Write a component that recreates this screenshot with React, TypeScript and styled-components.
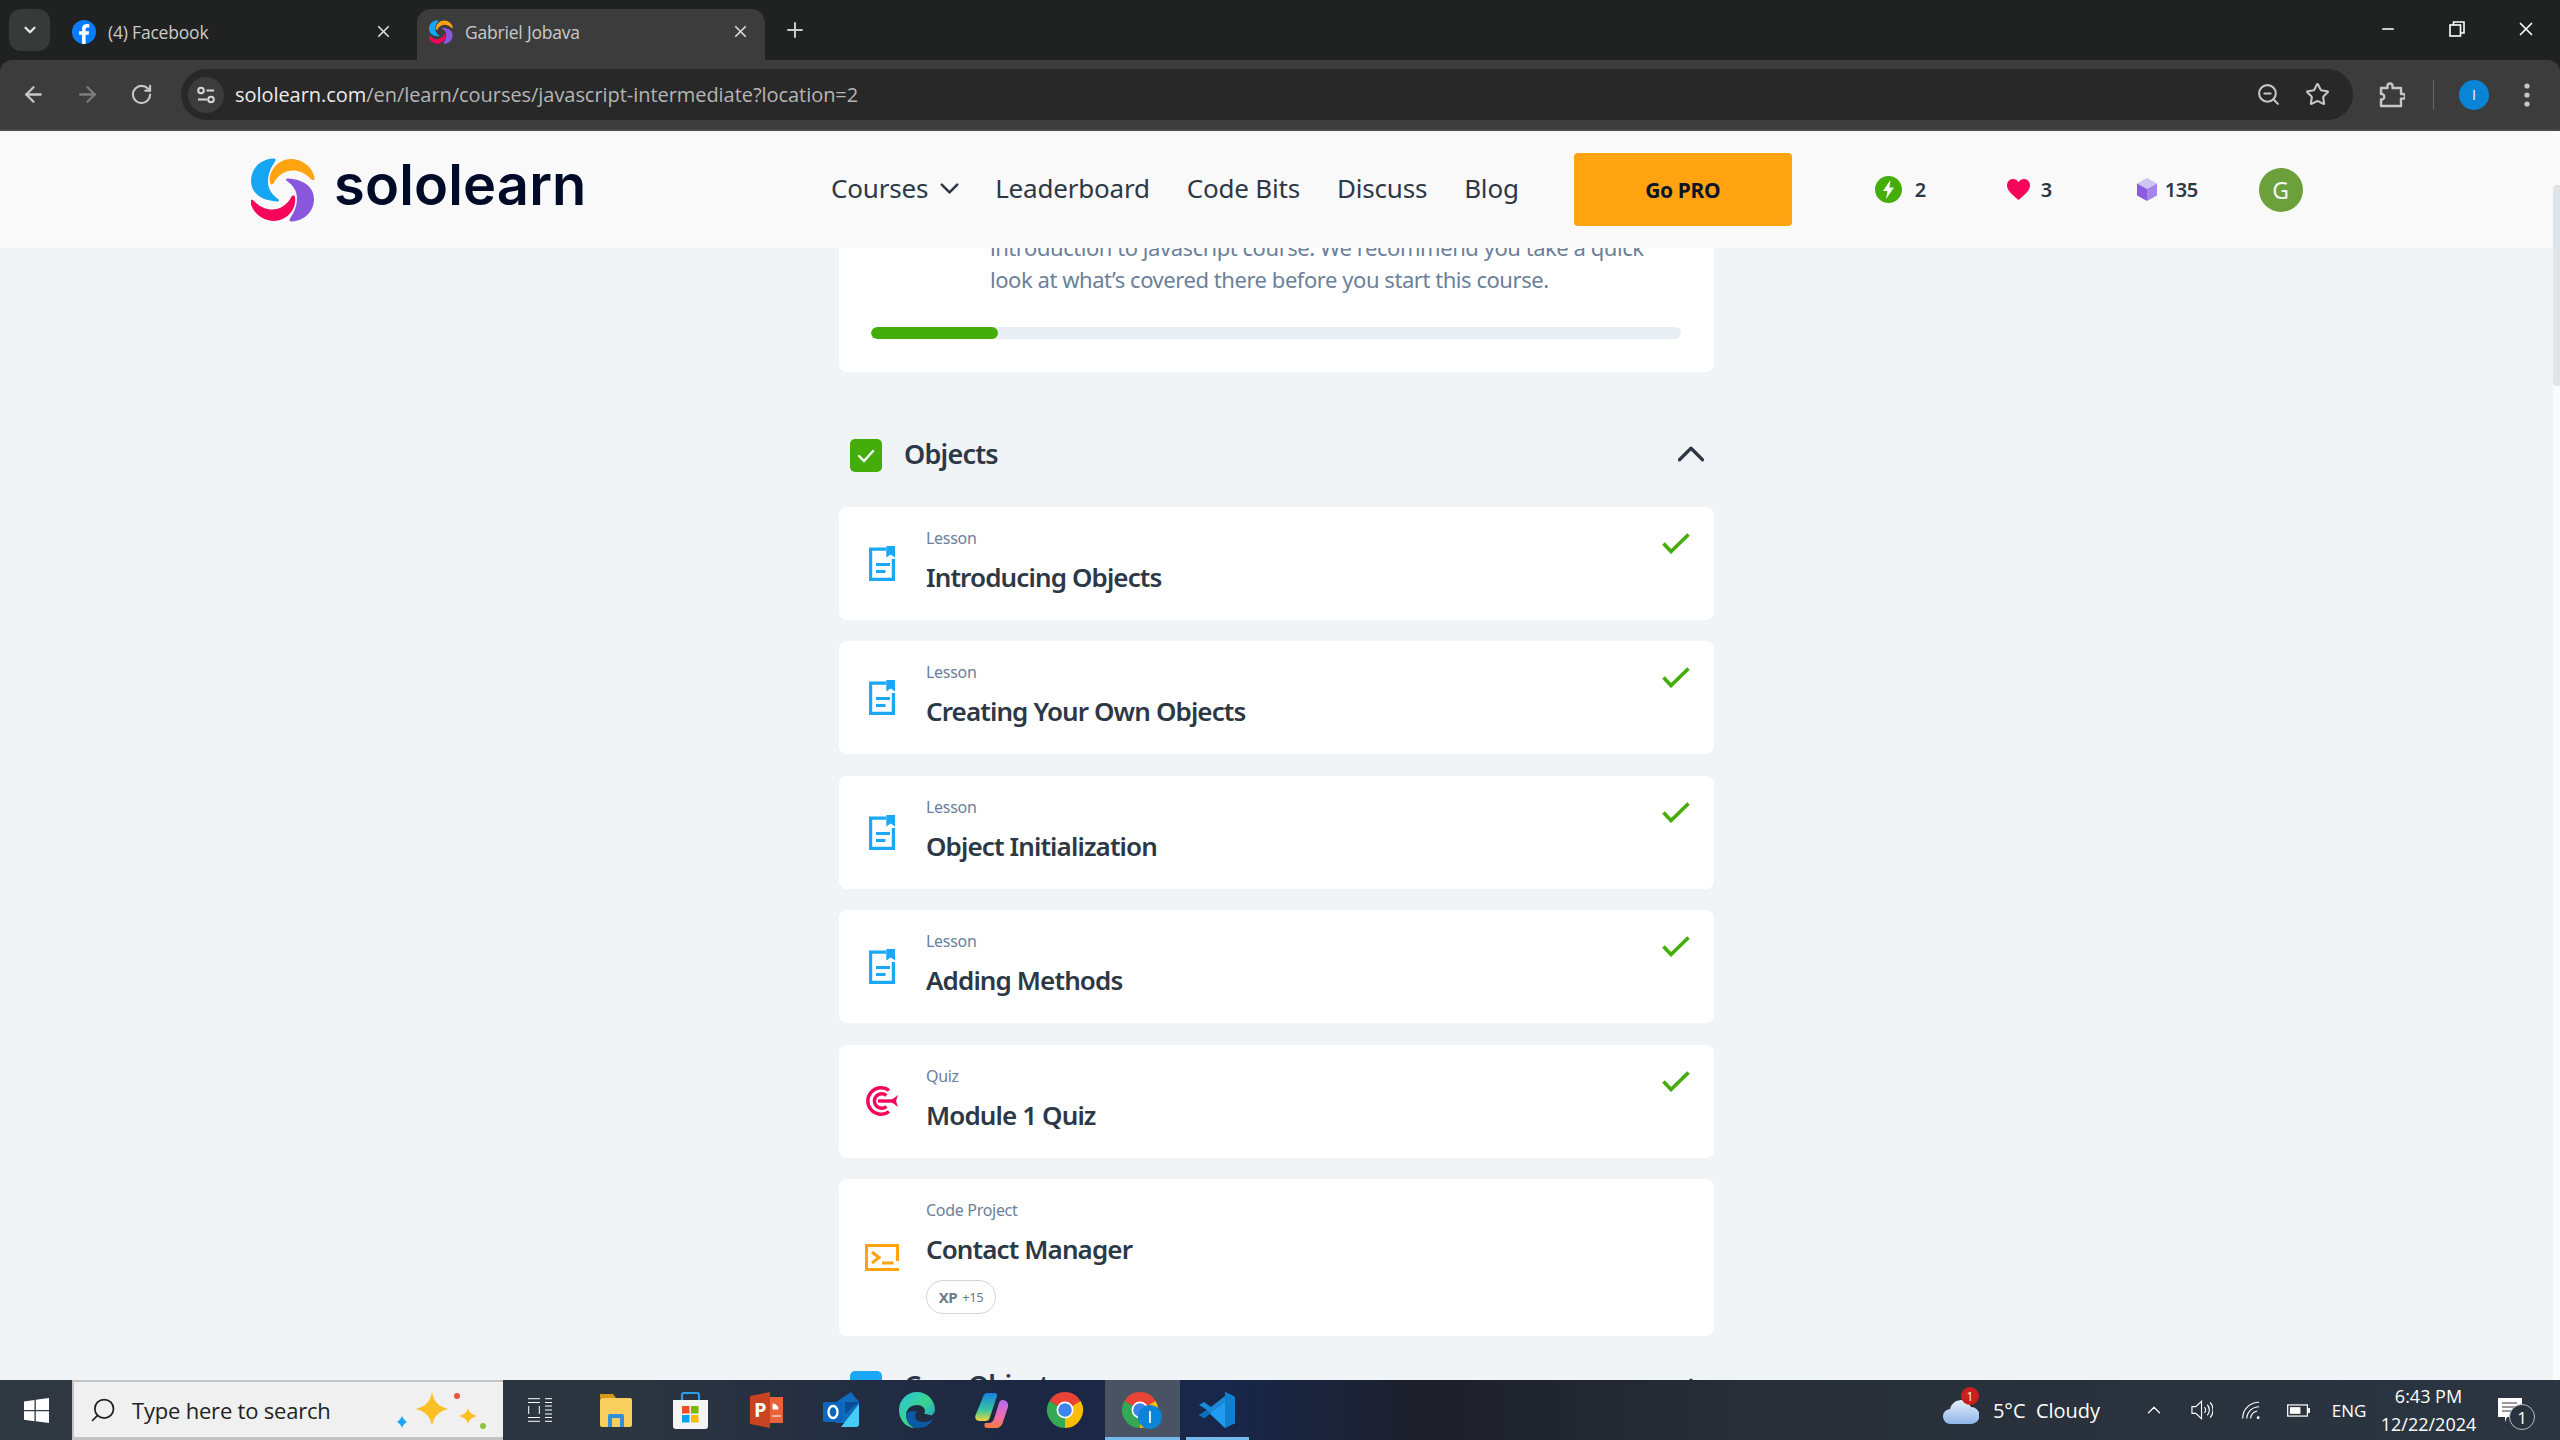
import React from "react";
import styled, { createGlobalStyle } from "styled-components";
import { ArrowLeft, ArrowRight, ChevronDown, ChevronUp, Minus, Plus, RotateCw, Search, Star, X, ZoomOut } from "lucide-react";

const GlobalStyle = createGlobalStyle`
  html, body {
    margin: 0;
    padding: 0;
    overflow: hidden;
    background: #202221;
  }
  * {
    box-sizing: border-box;
  }
`;

const BODY_FONT = `"Noto Sans", "Open Sans", sans-serif`;
const UI_FONT = `"Open Sans", "Noto Sans", sans-serif`;

const Page = styled.div`
  width: 2560px;
  height: 1440px;
  display: flex;
  flex-direction: column;
  overflow: hidden;
`;

/* browser chrome */
const TabStrip = styled.div`
  height: 60px;
  flex: none;
  display: flex;
  background: #202221;
  padding-left: 9px;
`;

const TabMenu = styled.div`
  width: 41px;
  height: 42px;
  margin-top: 9px;
  border-radius: 12px;
  background: #383a39;
  display: flex;
  align-items: center;
  justify-content: center;
  color: #e8e8e8;
`;

const Tab = styled.div<{ $active?: boolean; $w: number }>`
  width: ${(p) => p.$w}px;
  height: 51px;
  margin-top: 9px;
  margin-left: 7px;
  padding-left: ${(p) => (p.$active ? 12 : 15)}px;
  padding-right: ${(p) => (p.$active ? 15 : 17)}px;
  display: flex;
  align-items: center;
  gap: 12px;
  padding-bottom: 6px;
  border-radius: 14px 14px 0 0;
  background: ${(p) => (p.$active ? "#3c3c3c" : "transparent")};
`;

const TabTitle = styled.span`
  flex: 1;
  font-family: ${UI_FONT};
  font-size: 17.5px;
  letter-spacing: -0.2px;
  color: #c9cbca;
`;

const NewTab = styled.div`
  width: 30px;
  margin-left: 15px;
  height: 60px;
  display: flex;
  align-items: center;
  justify-content: center;
  color: #c9cbca;
`;

const WindowControls = styled.div`
  margin-left: auto;
  display: flex;
  height: 58px;
`;

const WindowButton = styled.div`
  width: 69px;
  display: flex;
  align-items: center;
  justify-content: center;
  color: #fff;
`;

const Toolbar = styled.div`
  height: 71px;
  flex: none;
  display: flex;
  align-items: center;
  padding-left: 6px;
  background: #3c3c3c;
  border-bottom: 2px solid #494949;
  border-radius: 12px 12px 0 0;
`;

const ToolButton = styled.div<{ $dim?: boolean; $ml?: number }>`
  width: 54px;
  height: 48px;
  margin-left: ${(p) => p.$ml ?? 0}px;
  display: flex;
  align-items: center;
  justify-content: center;
  color: ${(p) => (p.$dim ? "#7c7c7c" : "#c7c7c7")};
`;

const Omnibox = styled.div`
  width: 2172px;
  height: 51px;
  margin-left: 13px;
  padding: 0 11px 0 7px;
  display: flex;
  align-items: center;
  background: #282828;
  border-radius: 26px;
`;

const SiteInfo = styled.div`
  width: 36px;
  height: 36px;
  border-radius: 50%;
  background: #3c3c3c;
  display: flex;
  align-items: center;
  justify-content: center;
`;

const Url = styled.div`
  margin-left: 11px;
  flex: 1;
  font-family: ${UI_FONT};
  font-size: 20px;
  letter-spacing: -0.05px;
  color: #b5b5b5;
  white-space: nowrap;
  b {
    font-weight: 400;
    color: #ececec;
  }
`;

const OmniIcon = styled.div`
  width: 49px;
  display: flex;
  justify-content: center;
  color: #c7c7c7;
`;

const ToolDivider = styled.div`
  width: 1px;
  height: 30px;
  margin: 0 25px 0 14px;
  background: #666;
`;

const ProfileDot = styled.div`
  width: 30px;
  height: 30px;
  border-radius: 50%;
  background: #0a84d6;
  color: #fff;
  font-family: ${UI_FONT};
  font-size: 14px;
  display: flex;
  align-items: center;
  justify-content: center;
`;

/* page */
const PageArea = styled.div`
  flex: 1;
  min-height: 0;
  display: flex;
  background: #fbfbfb;
`;

const PageColumn = styled.div`
  flex: 1;
  min-width: 0;
  display: flex;
  flex-direction: column;
`;

const ScrollTrack = styled.div`
  width: 7px;
  padding-top: 54px;
`;

const ScrollThumb = styled.div`
  height: 201px;
  background: #dfe4e8;
  border-radius: 4px 0 0 4px;
`;

const SiteHeader = styled.header`
  height: 117px;
  flex: none;
  display: flex;
  align-items: center;
  padding-left: 251px;
  background: #f9f9f9;
  font-family: ${BODY_FONT};
`;

const LogoLink = styled.div`
  display: flex;
  align-items: center;
  gap: 19px;
  width: 332px;
  svg {
    flex: none;
  }
`;

const LogoWord = styled.span`
  margin-top: -9px;
  font-family: Inter, sans-serif;
  font-size: 56px;
  line-height: 64px;
  font-weight: 600;
  letter-spacing: 0.15px;
  color: #010b27;
`;

const Nav = styled.nav`
  display: flex;
  align-items: center;
  gap: 37px;
  margin-left: 248px;
  margin-top: -3px;
`;

const NavItem = styled.div`
  display: flex;
  align-items: center;
  gap: 6px;
  font-size: 26px;
  letter-spacing: -0.2px;
  color: #2d3846;
  white-space: nowrap;
`;

const NavChevron = styled(ChevronDown)`
  margin-right: -7px;
`;

const GoPro = styled.div`
  width: 218px;
  height: 73px;
  margin-left: 55px;
  border-radius: 4px;
  background: #ffa310;
  color: #0c1428;
  font-size: 21px;
  font-weight: 700;
  letter-spacing: -0.4px;
  display: flex;
  align-items: center;
  justify-content: center;
`;

const Stats = styled.div`
  display: flex;
  align-items: center;
  margin-left: 83px;
`;

const Stat = styled.div<{ $w: number; $gap: number }>`
  width: ${(p) => p.$w}px;
  display: flex;
  align-items: center;
  gap: ${(p) => p.$gap}px;
  font-size: 20px;
  font-weight: 600;
  letter-spacing: -0.4px;
  color: #2d3846;
`;

const Avatar = styled.div`
  width: 44px;
  height: 44px;
  border-radius: 50%;
  background: #6ba03a;
  color: #f4f4f4;
  font-size: 23px;
  display: flex;
  align-items: center;
  justify-content: center;
`;

const Main = styled.main`
  flex: 1;
  min-height: 0;
  overflow: hidden;
  background: #f1f4f7;
  display: flex;
  justify-content: center;
  font-family: ${BODY_FONT};
`;

const CourseColumn = styled.div`
  width: 875px;
  margin-top: -17px;
  display: flex;
  flex-direction: column;
`;

const IntroCard = styled.section`
  flex: none;
  background: #fff;
  border-radius: 0 0 8px 8px;
  padding: 0 33px 33px 32px;
  margin-bottom: 32px;
`;

const IntroText = styled.p`
  margin: 0 0 32px 119px;
  font-size: 22px;
  line-height: 32px;
  letter-spacing: -0.45px;
  color: #6c809a;
  white-space: nowrap;
`;

const ProgressTrack = styled.div`
  height: 12px;
  border-radius: 6px;
  background: #e9eef2;
  overflow: hidden;
`;

const ProgressFill = styled.div`
  height: 100%;
  border-radius: 6px;
  background: #44ad0a;
`;

const ModuleHeader = styled.div`
  flex: none;
  height: 103px;
  display: flex;
  align-items: center;
  gap: 22px;
  padding-left: 11px;
  color: #2d3846;
`;

const ModuleBox = styled.div<{ $color: string }>`
  width: 32px;
  height: 33px;
  border-radius: 5px;
  background: ${(p) => p.$color};
  display: flex;
  align-items: center;
  justify-content: center;
`;

const ModuleTitle = styled.h2`
  flex: 1;
  margin: -5px 0 0;
  font-size: 27px;
  font-weight: 600;
  letter-spacing: -0.8px;
`;

const ModuleChevron = styled(ChevronUp)`
  margin-top: -3px;
`;

const LessonList = styled.div`
  display: flex;
  flex-direction: column;
  gap: 21.4px;
`;

const LessonCard = styled.article<{ $tall?: boolean }>`
  flex: none;
  height: ${(p) => (p.$tall ? 157 : 113)}px;
  background: #fff;
  border-radius: 8px;
  display: flex;
  align-items: center;
  padding: 0 24px 0 26px;
`;

const LessonIcon = styled.div`
  width: 34px;
  display: flex;
  justify-content: center;
`;

const LessonBody = styled.div`
  align-self: flex-start;
  flex: 1;
  margin-left: 27px;
  padding-top: 19px;
`;

const LessonKind = styled.div`
  font-size: 16px;
  line-height: 24px;
  letter-spacing: -0.3px;
  color: #6c809a;
`;

const LessonName = styled.div`
  margin-top: 7px;
  font-size: 26px;
  line-height: 40px;
  font-weight: 600;
  letter-spacing: -0.88px;
  color: #2d3846;
`;

const XpPill = styled.div`
  width: 70px;
  height: 34px;
  margin-top: 11px;
  border: 1px solid #cdd5de;
  border-radius: 17px;
  display: flex;
  align-items: center;
  justify-content: center;
  gap: 5px;
  font-size: 15px;
  letter-spacing: -0.4px;
  color: #6c7a8c;
  b {
    font-weight: 700;
  }
  span {
    font-size: 13px;
  }
`;

const DoneMark = styled.div`
  align-self: flex-start;
  margin-top: 26px;
  line-height: 0;
`;

/* taskbar */
const Taskbar = styled.footer`
  height: 60px;
  flex: none;
  display: flex;
  align-items: stretch;
  background: linear-gradient(90deg, #2f3841 0%, #2c3640 24%, #1c2742 40%, #18274a 48%, #1d2029 56%, #272e38 68%, #2b3642 100%);
  color: #fff;
`;

const StartButton = styled.div`
  width: 72px;
  display: flex;
  align-items: center;
  justify-content: center;
`;

const SearchBox = styled.div`
  width: 431px;
  display: flex;
  align-items: center;
  position: relative;
  padding-left: 15px;
  gap: 15px;
  background: #f0f0f0;
  border: 2px solid #c3c3c3;
  border-bottom-width: 3px;
  border-right: none;
  color: #222;
  font-family: ${UI_FONT};
  font-size: 22px;
  letter-spacing: -0.2px;
`;

const SearchGlass = styled(Search)`
  transform: scaleX(-1);
`;

const Sparkles = styled.svg`
  position: absolute;
  left: 322px;
  top: 8px;
`;

const TaskSlot = styled.div<{ $active?: boolean; $running?: boolean }>`
  width: 75.2px;
  position: relative;
  display: flex;
  align-items: center;
  justify-content: center;
  background: ${(p) => (p.$active ? "#4a5364" : "transparent")};
  &::after {
    content: "";
    display: ${(p) => (p.$running ? "block" : "none")};
    position: absolute;
    left: ${(p) => (p.$active ? 0 : 6)}px;
    right: ${(p) => (p.$active ? 0 : 6)}px;
    bottom: 0;
    height: 3px;
    background: #76b9ed;
  }
`;

const Tray = styled.div`
  margin-left: auto;
  padding-right: 38px;
  display: flex;
  align-items: center;
  font-family: ${UI_FONT};
  font-size: 20px;
`;

const TrayItem = styled.div<{ $gap?: number; $w: number; $small?: boolean }>`
  width: ${(p) => p.$w}px;
  margin-left: ${(p) => p.$gap ?? 0}px;
  position: relative;
  display: flex;
  align-items: center;
  justify-content: center;
  white-space: nowrap;
  font-size: ${(p) => (p.$small ? 17 : 20)}px;
`;

const RedBadge = styled.div`
  position: absolute;
  top: -9px;
  left: 18px;
  width: 18px;
  height: 18px;
  border-radius: 50%;
  background: #c9201b;
  font-size: 12px;
  display: flex;
  align-items: center;
  justify-content: center;
`;

const Clock = styled.div`
  display: flex;
  flex-direction: column;
  align-items: center;
  font-size: 18px;
  line-height: 28px;
`;

const NotifyBadge = styled.div`
  position: absolute;
  left: 11px;
  top: 6px;
  width: 26px;
  height: 26px;
  border-radius: 50%;
  border: 1.5px solid #b8bcc0;
  background: #2a333d;
  font-size: 17px;
  display: flex;
  align-items: center;
  justify-content: center;
`;

function LogoMark({ size }: { size: number }) {
  const blue = "M22 .6C10 1.2 0 10 0 23c0 11 9 19.5 26 20.5 2.2.1 2.6-1.4 1-2.6C20 36 17 30 17 24c0-8 3-15 7-20.5C25.3 1.6 24.2.5 22 .6Z";
  const orange = "M19 25C17 12 28 1 40 1c12 0 22 9 23.6 19 .3 2-1.6 3-3.1 1.5C54 15 48 12.5 42 12.5c-8 0-15 4.5-19 12-1.2 2.500-3.600 2.500-4 .5Z";
  return (
    <svg width={size} height={size} viewBox="0 0 64 64">
      <path d={blue} fill="#15a5f3" />
      <path d={orange} fill="#ffa310" />
      <path d={blue} fill="#8957dc" transform="rotate(180 31.500 32)" />
      <path d={orange} fill="#f5065b" transform="rotate(180 31.500 32)" />
    </svg>
  );
}

function FacebookIcon() {
  return (
    <svg width="24" height="24" viewBox="0 0 24 24">
      <circle cx="12" cy="12" r="12" fill="#0a7cff" />
      <path d="M13.600 24v-9.200h3l.5-3.600h-3.500V9.200c0-1 .4-1.800 1.900-1.800h1.700V4.300c-.6-.1-1.600-.2-2.600-.2-2.700 0-4.500 1.600-4.500 4.600v2.500h-3v3.600h3V24Z" fill="#fff" />
    </svg>
  );
}

function TuneIcon() {
  return (
    <svg width="20" height="18" viewBox="0 0 20 18" fill="none" stroke="#d8d8d8" strokeWidth="2">
      <circle cx="5" cy="4.500" r="2.800" />
      <path d="M10.500 4.500H18M2 13.500h9" />
      <circle cx="15" cy="13.500" r="2.800" />
    </svg>
  );
}

function RestoreIcon() {
  return (
    <svg width="16" height="16" viewBox="0 0 16 16" fill="none" stroke="#fff" strokeWidth="1.600">
      <rect x="1" y="4" width="10.500" height="11" />
      <path d="M4.500 4V1H15v11h-3.500" />
    </svg>
  );
}

function PuzzleIcon() {
  return (
    <svg width="26" height="26" viewBox="0 0 26 26" fill="none" stroke="#c7c7c7" strokeWidth="2.400" strokeLinejoin="round">
      <path d="M2 6h6.500V4a2.500 2.500 0 0 1 5 0v2H22v6h2a2.300 2.300 0 0 1 0 4.600h-2V24H2v-6.500h1.500a3 3 0 0 0 0-5.500H2Z" />
    </svg>
  );
}

function MoreIcon() {
  return (
    <svg width="8" height="26" viewBox="0 0 8 26" fill="#c7c7c7">
      <circle cx="4" cy="4" r="2.600" />
      <circle cx="4" cy="13" r="2.600" />
      <circle cx="4" cy="22" r="2.600" />
    </svg>
  );
}

function BoltBadge() {
  return (
    <svg width="27" height="27" viewBox="0 0 27 27">
      <circle cx="13.500" cy="13.500" r="13.500" fill="#44ad0a" />
      <path d="M15.500 4 8 15h4.500L11 23l8-11.500h-4.700Z" fill="#fff" />
    </svg>
  );
}

function HeartBadge() {
  return (
    <svg width="23" height="21" viewBox="0 0 23 21">
      <path d="M11.500 21C5 15 0 11.500 0 6.200 0 2.600 2.700 0 6 0c2.300 0 4.300 1.200 5.500 3.200C12.700 1.200 14.700 0 17 0c3.300 0 6 2.600 6 6.200 0 5.300-5 8.800-11.500 14.800Z" fill="#f5065b" />
    </svg>
  );
}

function GemBadge() {
  return (
    <svg width="20" height="23" viewBox="0 0 20 23">
      <path d="M10 0 20 5.500 10 11 0 5.500Z" fill="#cfc5f5" />
      <path d="M0 5.500 10 11v12L0 17.500Z" fill="#8a5ce0" />
      <path d="M20 5.500 10 11v12l10-5.500Z" fill="#a684ee" />
    </svg>
  );
}

function CheckSmall() {
  return (
    <svg width="18" height="14" viewBox="0 0 18 14" fill="none" stroke="#fff" strokeWidth="2.400" strokeLinecap="round">
      <path d="M2 7l5 5 9-10" />
    </svg>
  );
}

function DoneCheck() {
  return (
    <svg width="28" height="21" viewBox="0 0 28 21" fill="none" stroke="#44ad0a" strokeWidth="3.600">
      <path d="M1.500 10.500 9 18.500 26.500 1.500" />
    </svg>
  );
}

function DocIcon() {
  return (
    <svg width="26" height="35" viewBox="0 0 26 35" fill="#1aa7f5">
      <path d="M17 3.200H1.600v30.200h22.800V13" fill="none" stroke="#1aa7f5" strokeWidth="3.200" />
      <path d="M17.300 0H26v11.500l-4.300-3-4.400 3Z" />
      <rect x="7" y="17" width="14" height="3" />
      <rect x="7" y="24" width="9.500" height="3" />
    </svg>
  );
}

function QuizIcon() {
  return (
    <svg width="34" height="30" viewBox="0 0 34 30" fill="none" stroke="#f5065b" strokeWidth="3.400">
      <path d="M24 4.300A13.300 13.300 0 1 0 24 25.700" />
      <path d="M21.500 9.500A7.300 7.300 0 1 0 21.500 20.500" />
      <path d="M13 15h16" />
      <path d="M25 15l8-6-2 6 2 6Z" fill="#f5065b" stroke="none" />
    </svg>
  );
}

function CodeIcon() {
  return (
    <svg width="34" height="27" viewBox="0 0 34 27" fill="none" stroke="#ffa310" strokeWidth="3">
      <path d="M32.500 17V1.500H1.500v24H34" />
      <path d="M7 8l7 5.500L7 19" />
      <path d="M17 19h11.500" />
    </svg>
  );
}

function WindowsIcon() {
  return (
    <svg width="25" height="25" viewBox="0 0 25 25" fill="#fff">
      <path d="M0 3.500 10.500 2v10H0Z" />
      <path d="M11.800 1.800 25 0v12H11.800Z" />
      <path d="M0 13.200h10.500v10L0 21.800Z" />
      <path d="M11.800 13.200H25V25l-13.200-1.800Z" />
    </svg>
  );
}

function TaskViewIcon() {
  return (
    <svg width="25" height="24" viewBox="0 0 25 24" fill="none" stroke="#fff" strokeWidth="1">
      <path d="M0 .7h12M0 4.500h12M17 .7h7M17 4.500h7" />
      <path d="M.7 8v8M11.300 8v8M17 8h7M17 12h7M17 16h7" />
      <path d="M0 19.500h12M0 23.300h12M17 19.500h7M17 23.300h7" />
    </svg>
  );
}

function ExplorerIcon() {
  return (
    <svg width="34" height="36" viewBox="0 0 34 36">
      <path d="M1 2h13l3 4H1Z" fill="#d49a17" />
      <rect x="1" y="6" width="32" height="29" rx="2" fill="#f8cf5c" />
      <path d="M9 35V24a2 2 0 0 1 2-2h12a2 2 0 0 1 2 2v11h-4v-9h-8v9Z" fill="#2f8fd8" />
    </svg>
  );
}

function StoreIcon() {
  return (
    <svg width="35" height="37" viewBox="0 0 35 37">
      <path d="M9 9V3a2 2 0 0 1 2-2h13a2 2 0 0 1 2 2v6" fill="none" stroke="#2f9be8" strokeWidth="2.200" />
      <path d="M0 8h35v26a3 3 0 0 1-3 3H3a3 3 0 0 1-3-3Z" fill="#f4f4f4" />
      <rect x="9" y="14" width="7.500" height="7.500" fill="#f04e23" />
      <rect x="18" y="14" width="7.500" height="7.500" fill="#7eb900" />
      <rect x="9" y="23" width="7.500" height="7.500" fill="#00a3ee" />
      <rect x="18" y="23" width="7.500" height="7.500" fill="#ffb900" />
    </svg>
  );
}

function PowerPointIcon() {
  return (
    <svg width="33" height="36" viewBox="0 0 33 36">
      <path d="M20 0v36L0 32V4Z" fill="#c8431f" />
      <path d="M20 5h13v26H20Z" fill="#e8633a" />
      <text x="4" y="25" fontFamily="Open Sans, sans-serif" fontSize="20" fontWeight="700" fill="#fff">P</text>
      <path d="M23 12a5 5 0 0 1 5 5h-5ZM22 24h9" fill="#fff" stroke="#fff" />
    </svg>
  );
}

function OutlookIcon() {
  return (
    <svg width="36" height="36" viewBox="0 0 36 36">
      <path d="M13 10 28 0l8 10v18a3 3 0 0 1-3 3H13Z" fill="#0f6cbd" />
      <path d="M36 12v20a3 3 0 0 1-3 3H18Z" fill="#47cdf3" />
      <path d="M22 10h14L22 22Z" fill="#0a4d96" />
      <rect x="0" y="10" width="20" height="20" rx="2" fill="#0a66bf" />
      <ellipse cx="10" cy="20" rx="4.500" ry="6" fill="none" stroke="#fff" strokeWidth="2.400" />
    </svg>
  );
}

function EdgeIcon() {
  return (
    <svg width="36" height="36" viewBox="0 0 36 36">
      <defs>
        <linearGradient id="edgeTop" x1="0" y1="0" x2="1" y2="1">
          <stop offset="0" stopColor="#27c3e0" />
          <stop offset="0.5" stopColor="#3bd58f" />
          <stop offset="1" stopColor="#1a8fd6" />
        </linearGradient>
      </defs>
      <path d="M18 0C8 0 0 8 0 18c0 10 7 18 16 18-6-2-9-8-9-13 0-6 5-10 11-10 5 0 8 3 8 6 0 1-.5 2-1 2.500l8 2C36 20 36 19 36 18 36 8 28 0 18 0Z" fill="url(#edgeTop)" />
      <path d="M7 23c0 7 6 13 12 13 7 0 12-3 15-9-3 2-6 3-10 3-5 0-8-3-8-6 0-2 1-3 2-4-5-2-11 0-11 3Z" fill="#0b5aa8" />
    </svg>
  );
}

function CopilotIcon() {
  return (
    <svg width="34" height="36" viewBox="0 0 34 36">
      <defs>
        <linearGradient id="copilotA" x1="0" y1="0" x2="0" y2="1">
          <stop offset="0" stopColor="#1a7fe0" />
          <stop offset="0.6" stopColor="#35c7a0" />
          <stop offset="1" stopColor="#f3d33c" />
        </linearGradient>
        <linearGradient id="copilotB" x1="0" y1="0" x2="0" y2="1">
          <stop offset="0" stopColor="#b36cf0" />
          <stop offset="0.6" stopColor="#f06cb0" />
          <stop offset="1" stopColor="#f57a3a" />
        </linearGradient>
      </defs>
      <path d="M12 1h8c3 0 2 3 1 6l-6 18c-1 3-2 4-5 4H5c-4 0-6-3-4-7L8 5c1-3 2-4 4-4Z" fill="url(#copilotA)" />
      <path d="M28 8c3 0 6 3 5 7l-5 15c-1 4-4 6-7 6H12c-3 0-3-3-2-5h4c3 0 4-2 5-4l5-16c.5-2 2-3 4-3Z" fill="url(#copilotB)" />
    </svg>
  );
}

function ChromeIcon({ profile }: { profile?: boolean }) {
  return (
    <svg width="40" height="38" viewBox="0 0 40 38">
      <path d="M18 19 2.400 10A18 18 0 0 1 33.600 10Z" fill="#e94335" />
      <path d="M18 19 33.600 10A18 18 0 0 1 18 37Z" fill="#fbbc05" />
      <path d="M18 19V37A18 18 0 0 1 2.400 10Z" fill="#34a853" />
      <circle cx="18" cy="19" r="8.500" fill="#fff" />
      <circle cx="18" cy="19" r="6.800" fill="#3f83ee" />
      {profile && (
        <>
          <circle cx="28" cy="26" r="12" fill="#0a84d6" />
          <rect x="27" y="20" width="2" height="12" fill="#d8ecfa" />
        </>
      )}
    </svg>
  );
}

function VsCodeIcon() {
  return (
    <svg width="36" height="36" viewBox="0 0 36 36">
      <path d="M26 0 36 5v26l-10 5L9 20l17-13Z" fill="#1f9cf0" />
      <path d="M26 0v36l10-5V5Z" fill="#0f7fd0" />
      <path d="M26 10 12 21l-7 5-5-3 8-5-8-5 5-3 7 5 14-11Z" fill="#1a8ad8" />
      <path d="M0 23l8-5 4 3-7 5Z" fill="#0c6fb8" />
    </svg>
  );
}

function CloudIcon() {
  return (
    <svg width="36" height="28" viewBox="0 0 36 28">
      <defs>
        <linearGradient id="cloud" x1="0" y1="0" x2="0" y2="1">
          <stop offset="0" stopColor="#e6effb" />
          <stop offset="1" stopColor="#8fb5ea" />
        </linearGradient>
      </defs>
      <path d="M8 28a7.500 7.500 0 0 1-1-15 11 11 0 0 1 21-2 8.500 8.500 0 0 1 0 17Z" fill="url(#cloud)" />
    </svg>
  );
}

function SpeakerIcon() {
  return (
    <svg width="23" height="20" viewBox="0 0 23 20" fill="none" stroke="#fff" strokeWidth="1.200">
      <path d="M1 6.500h4l6-5.500v18l-6-5.500H1Z" />
      <path d="M14 7a4 4 0 0 1 0 6M17 4.500a8 8 0 0 1 0 11M20 2a12 12 0 0 1 0 16" />
    </svg>
  );
}

function WifiIcon() {
  return (
    <svg width="20" height="19" viewBox="0 0 20 19" fill="none" stroke="#fff" strokeWidth="1.200">
      <path d="M.7 18A17 17 0 0 1 18 .8M5 18A13 13 0 0 1 18 5.500M9 18A9 9 0 0 1 16 10" />
      <circle cx="17" cy="17" r="1.500" fill="#fff" stroke="none" />
    </svg>
  );
}

function BatteryIcon() {
  return (
    <svg width="24" height="13" viewBox="0 0 24 13">
      <rect x=".7" y=".7" width="20.600" height="11.600" fill="none" stroke="#fff" strokeWidth="1.300" />
      <rect x="3" y="3" width="11" height="7" fill="#fff" />
      <rect x="22" y="4" width="2" height="5" fill="#fff" />
    </svg>
  );
}

function NotifyIcon() {
  return (
    <svg width="24" height="24" viewBox="0 0 24 24">
      <path d="M0 0h24v19H9l-2 5v-5H0Z" fill="#fff" />
      <path d="M4 5h15M4 9h15M4 13h15" stroke="#333" strokeWidth="1.200" />
    </svg>
  );
}

type Lesson = { kind: string; name: string; icon: "doc" | "quiz" };

const lessons: Lesson[] = [
  { kind: "Lesson", name: "Introducing Objects", icon: "doc" },
  { kind: "Lesson", name: "Creating Your Own Objects", icon: "doc" },
  { kind: "Lesson", name: "Object Initialization", icon: "doc" },
  { kind: "Lesson", name: "Adding Methods", icon: "doc" },
  { kind: "Quiz", name: "Module 1 Quiz", icon: "quiz" },
];

function App() {
  return (
    <Page>
      <GlobalStyle />
      <TabStrip>
        <TabMenu>
          <ChevronDown size={18} strokeWidth={3} />
        </TabMenu>
        <Tab $w={353}>
          <FacebookIcon />
          <TabTitle>(4) Facebook</TabTitle>
          <X size={19} color="#d8d8d8" strokeWidth={2.2} />
        </Tab>
        <Tab $w={348} $active>
          <LogoMark size={24} />
          <TabTitle>Gabriel Jobava</TabTitle>
          <X size={19} color="#d8d8d8" strokeWidth={2.2} />
        </Tab>
        <NewTab>
          <Plus size={24} strokeWidth={2} />
        </NewTab>
        <WindowControls>
          <WindowButton>
            <Minus size={18} strokeWidth={2} />
          </WindowButton>
          <WindowButton>
            <RestoreIcon />
          </WindowButton>
          <WindowButton>
            <X size={22} strokeWidth={1.8} />
          </WindowButton>
        </WindowControls>
      </TabStrip>

      <Toolbar>
        <ToolButton>
          <ArrowLeft size={25} strokeWidth={2.2} />
        </ToolButton>
        <ToolButton $dim>
          <ArrowRight size={25} strokeWidth={2.2} />
        </ToolButton>
        <ToolButton>
          <RotateCw size={23} strokeWidth={2.2} />
        </ToolButton>
        <Omnibox>
          <SiteInfo>
            <TuneIcon />
          </SiteInfo>
          <Url>
            <b>sololearn.com</b>/en/learn/courses/javascript-intermediate?location=2
          </Url>
          <OmniIcon>
            <ZoomOut size={25} strokeWidth={2} />
          </OmniIcon>
          <OmniIcon>
            <Star size={25} strokeWidth={2} />
          </OmniIcon>
        </Omnibox>
        <ToolButton $ml={12}>
          <PuzzleIcon />
        </ToolButton>
        <ToolDivider />
        <ProfileDot>I</ProfileDot>
        <ToolButton $ml={11}>
          <MoreIcon />
        </ToolButton>
      </Toolbar>

      <PageArea>
        <PageColumn>
          <SiteHeader>
            <LogoLink>
              <LogoMark size={64} />
              <LogoWord>sololearn</LogoWord>
            </LogoLink>
            <Nav>
              <NavItem>
                Courses
                <NavChevron size={31} strokeWidth={2} />
              </NavItem>
              <NavItem>Leaderboard</NavItem>
              <NavItem>Code Bits</NavItem>
              <NavItem>Discuss</NavItem>
              <NavItem>Blog</NavItem>
            </Nav>
            <GoPro>Go PRO</GoPro>
            <Stats>
              <Stat $w={132} $gap={13}>
                <BoltBadge />2
              </Stat>
              <Stat $w={130} $gap={11}>
                <HeartBadge />3
              </Stat>
              <Stat $w={122} $gap={8}>
                <GemBadge />135
              </Stat>
              <Avatar>G</Avatar>
            </Stats>
          </SiteHeader>

          <Main>
            <CourseColumn>
              <IntroCard>
                <IntroText>
                  introduction to javascript course. We recommend you take a quick
                  <br />
                  look at what’s covered there before you start this course.
                </IntroText>
                <ProgressTrack>
                  <ProgressFill style={{ width: `${(127 / 810) * 100}%` }} />
                </ProgressTrack>
              </IntroCard>

              <ModuleHeader>
                <ModuleBox $color="#44ad0a">
                  <CheckSmall />
                </ModuleBox>
                <ModuleTitle>Objects</ModuleTitle>
                <ModuleChevron size={46} strokeWidth={1.7} />
              </ModuleHeader>

              <LessonList>
                {lessons.map((l) => (
                  <LessonCard key={l.name}>
                    <LessonIcon>{l.icon === "doc" ? <DocIcon /> : <QuizIcon />}</LessonIcon>
                    <LessonBody>
                      <LessonKind>{l.kind}</LessonKind>
                      <LessonName>{l.name}</LessonName>
                    </LessonBody>
                    <DoneMark>
                      <DoneCheck />
                    </DoneMark>
                  </LessonCard>
                ))}
                <LessonCard $tall>
                  <LessonIcon>
                    <CodeIcon />
                  </LessonIcon>
                  <LessonBody>
                    <LessonKind>Code Project</LessonKind>
                    <LessonName>Contact Manager</LessonName>
                    <XpPill>
                      <b>XP</b>
                      <span>+15</span>
                    </XpPill>
                  </LessonBody>
                </LessonCard>
              </LessonList>

              <ModuleHeader>
                <ModuleBox $color="#1aa7f5" />
                <ModuleTitle>Core Objects</ModuleTitle>
                <ModuleChevron size={46} strokeWidth={1.7} />
              </ModuleHeader>
            </CourseColumn>
          </Main>
        </PageColumn>
        <ScrollTrack>
          <ScrollThumb />
        </ScrollTrack>
      </PageArea>

      <Taskbar>
        <StartButton>
          <WindowsIcon />
        </StartButton>
        <SearchBox>
          <SearchGlass size={28} strokeWidth={1.5} />
          Type here to search
          <Sparkles width="92" height="42" viewBox="0 0 92 42">
            <path d="M36 2c2 10 6 14 16 17-10 3-14 7-16 17-2-10-6-14-16-17 10-3 14-7 16-17Z" fill="#fbbf24" />
            <path d="M72 18c1 4 3 6 9 8-6 2-8 4-9 8-1-4-3-6-9-8 6-2 8-4 9-8Z" fill="#fbbf24" />
            <path d="M6 26c1 2 2 4 5 6-3 2-4 3-5 6-1-3-2-4-5-6 3-2 4-4 5-6Z" fill="#1aa7f5" />
            <circle cx="61" cy="6" r="3" fill="#e8553a" />
            <circle cx="87" cy="36" r="3" fill="#8cc63f" />
          </Sparkles>
        </SearchBox>
        <TaskSlot>
          <TaskViewIcon />
        </TaskSlot>
        <TaskSlot>
          <ExplorerIcon />
        </TaskSlot>
        <TaskSlot>
          <StoreIcon />
        </TaskSlot>
        <TaskSlot>
          <PowerPointIcon />
        </TaskSlot>
        <TaskSlot>
          <OutlookIcon />
        </TaskSlot>
        <TaskSlot>
          <EdgeIcon />
        </TaskSlot>
        <TaskSlot>
          <CopilotIcon />
        </TaskSlot>
        <TaskSlot>
          <ChromeIcon />
        </TaskSlot>
        <TaskSlot $active $running>
          <ChromeIcon profile />
        </TaskSlot>
        <TaskSlot $running>
          <VsCodeIcon />
        </TaskSlot>
        <Tray>
          <TrayItem $w={36}>
            <CloudIcon />
            <RedBadge>1</RedBadge>
          </TrayItem>
          <TrayItem $w={109} $gap={13}>
            5°C&nbsp;&nbsp;Cloudy
          </TrayItem>
          <TrayItem $w={22} $gap={42}>
            <ChevronUp size={26} strokeWidth={1.3} />
          </TrayItem>
          <TrayItem $w={22} $gap={26}>
            <SpeakerIcon />
          </TrayItem>
          <TrayItem $w={19} $gap={29}>
            <WifiIcon />
          </TrayItem>
          <TrayItem $w={23} $gap={26}>
            <BatteryIcon />
          </TrayItem>
          <TrayItem $w={34} $gap={22} $small>
            ENG
          </TrayItem>
          <TrayItem $w={93} $gap={16}>
            <Clock>
              <span>6:43 PM</span>
              <span>12/22/2024</span>
            </Clock>
          </TrayItem>
          <TrayItem $w={24} $gap={23}>
            <NotifyIcon />
            <NotifyBadge>1</NotifyBadge>
          </TrayItem>
        </Tray>
      </Taskbar>
    </Page>
  );
}

export default App;
